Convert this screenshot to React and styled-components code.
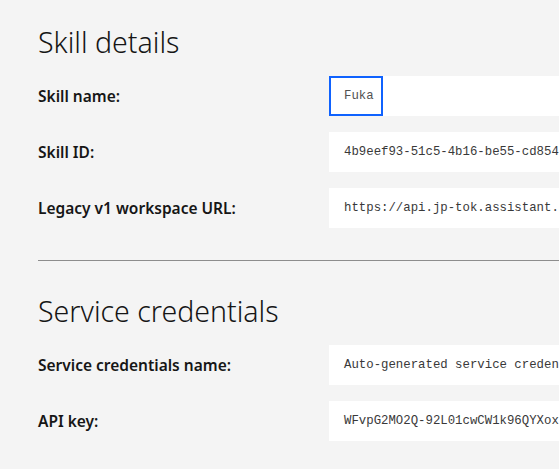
import React from "react";
import styled, { createGlobalStyle } from "styled-components";

const GlobalStyle = createGlobalStyle`
  html, body {
    margin: 0;
    padding: 0;
    background: #f4f4f4;
    overflow: hidden;
  }
`;

const Page = styled.div`
  font-family: "Noto Sans", "Open Sans", sans-serif;
  color: #161616;
  padding: 24px 0 0 38px;
  width: 521px;
  overflow: hidden;
`;

const Section = styled.section`
  display: flex;
  flex-direction: column;
`;

const Heading = styled.h2`
  margin: 0 0 16px;
  font-size: 28.5px;
  font-weight: 300;
  line-height: 36px;
  color: #161616;
`;

const Rows = styled.div`
  display: flex;
  flex-direction: column;
  gap: 16px;
`;

const Row = styled.div`
  display: grid;
  grid-template-columns: 291px 1fr;
  align-items: center;
  height: 40px;
`;

const Label = styled.div`
  font-size: 15.5px;
  font-weight: 600;
  color: #161616;
`;

const Field = styled.div`
  display: flex;
  align-items: center;
  height: 40px;
  background: #ffffff;
  font-family: "Liberation Mono", "DejaVu Sans Mono", monospace;
  font-size: 12.35px;
  color: #393939;
  white-space: nowrap;
  overflow: hidden;
`;

const Value = styled.span`
  padding-left: 15px;
`;

const Focused = styled.span`
  box-sizing: border-box;
  display: flex;
  align-items: center;
  height: 40px;
  width: 54px;
  padding-left: 13px;
  border: 2px solid #0f62fe;
  color: #525252;
`;

const Divider = styled.hr`
  border: none;
  border-top: 1px solid #8d8d8d;
  margin: 32px 0 32px;
`;

const skill = [
  { label: "Skill ID:", value: "4b9eef93-51c5-4b16-be55-cd854" },
  { label: "Legacy v1 workspace URL:", value: "https://api.jp-tok.assistant." },
];

const credentials = [
  { label: "Service credentials name:", value: "Auto-generated service creden" },
  { label: "API key:", value: "WFvpG2MO2Q-92L01cwCW1k96QYXox" },
];

export default function App() {
  return (
    <>
      <GlobalStyle />
      <Page>
        <Section>
          <Heading>Skill details</Heading>
          <Rows>
            <Row>
              <Label>Skill name:</Label>
              <Field>
                <Focused>Fuka</Focused>
              </Field>
            </Row>
            {skill.map((r) => (
              <Row key={r.label}>
                <Label>{r.label}</Label>
                <Field>
                  <Value>{r.value}</Value>
                </Field>
              </Row>
            ))}
          </Rows>
        </Section>
        <Divider />
        <Section>
          <Heading>Service credentials</Heading>
          <Rows>
            {credentials.map((r) => (
              <Row key={r.label}>
                <Label>{r.label}</Label>
                <Field>
                  <Value>{r.value}</Value>
                </Field>
              </Row>
            ))}
          </Rows>
        </Section>
      </Page>
    </>
  );
}
